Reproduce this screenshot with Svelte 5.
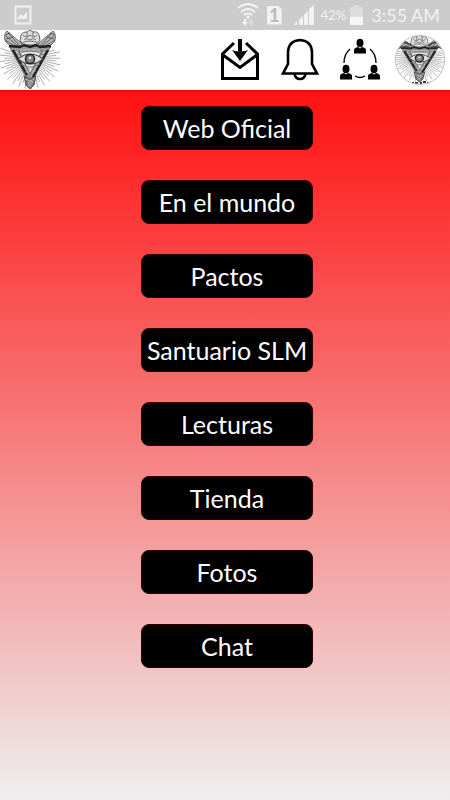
<script>
  const links = ['Web Oficial', 'En el mundo', 'Pactos', 'Santuario SLM', 'Lecturas', 'Tienda', 'Fotos', 'Chat'];

  const rays = Array.from({ length: 36 }, (_, i) => {
    const angle = (-18 + i * (216 / 35)) * Math.PI / 180;
    const end = i % 2 ? 31 : 26;
    return {
      x1: 30 + 13 * Math.cos(angle),
      y1: 28 + 13 * Math.sin(angle),
      x2: 30 + end * Math.cos(angle),
      y2: 28 + end * Math.sin(angle)
    };
  });
</script>

{#snippet emblem()}
  <g fill="none" stroke="#333">
    {#each rays as r}
      <line x1={r.x1} y1={r.y1} x2={r.x2} y2={r.y2} stroke="#777" stroke-width=".6" />
    {/each}
    <path d="M7 1C4 4 4 9 6 12l6 6 12 1-3-6zM53 1c3 3 3 8 1 11l-6 6-12 1 3-6z" fill="#bbb" stroke-width=".7" />
    <path d="M8 3l12 13M6 6l13 11M5 10l13 8M52 3 40 16M54 6 41 17M55 10l-13 8M10 3l-5 2M13 7l-7 2M50 3l5 2M47 7l7 2" stroke="#444" stroke-width=".8" />
    <path d="M21 5q2-4 6-3l3-2 3 2q5-1 6 3l1 5-4 5H24l-4-4z" fill="#ddd" stroke="#555" stroke-width=".9" />
    <path d="M23 5q3 4 7 0 4 4 7 0M24 10q3-3 6 0 3-3 6 0M22 13q8-4 16 0M27 2v5M33 2v5" stroke="#666" stroke-width=".9" />
    <path d="M9 16h42L30 54z" fill="#999" stroke="#555" stroke-width=".8" />
    <path d="M19 21h23L30 44z" fill="#eee" stroke="#555" stroke-width="1" />
    <path d="M9 16l11 1 4-2 6 2 6-2 4 2 11-1M13 20l14 25M48 20 33 47" stroke="#222" stroke-width="2.4" />
    <path d="M16 21l13 23M44 22 32 44M20 20h20" stroke="#ccc" stroke-width="1.1" />
    <path d="M18 29q12-10 25 0-12 10-25 0z" fill="#ddd" stroke="#444" stroke-width="1.1" />
    <path d="M17 25q13-8 27 0M20 34q10 6 20 0" stroke="#777" stroke-width=".9" />
    <circle cx="30" cy="29" r="4.500" fill="#888" stroke="#222" stroke-width="1.500" />
    <circle cx="30" cy="28" r="1.200" fill="#eee" stroke="none" />
    <path d="M26 36v7M29 36v9M32 36v9M35 36v6" stroke="#999" stroke-width=".9" />
    <path d="M24 46l6 3 6-3-2 9-4 4-4-4z" fill="#777" stroke="#444" stroke-width=".9" />
    <path d="M25 49l8 3-5 4M35 48l-7 5 3 4" stroke="#ccc" stroke-width=".8" />
  </g>
{/snippet}

<div class="app">
  <header>
    <div class="status">
      <svg width="18" height="20" viewBox="0 0 18 20"><path d="M1.500 1.500h15v17h-15z" fill="none" stroke="#f0f0f0" stroke-width="2" /><path d="M4 14v-2l3-3 2 2 4-4v7z" fill="#f0f0f0" /></svg>
      <svg class="wifi" width="22" height="24" viewBox="0 0 22 24" fill="none" stroke="#f4f4f4" stroke-width="2"><path d="M1 5q10-8 20 0M4 9q7-6 14 0M7 12q4-3 8 0" /><circle cx="11" cy="14" r="1.500" fill="#f4f4f4" stroke="none" /><path d="M8 16v4" /><path d="M5 19h6l-3 4z" fill="#f4f4f4" stroke="none" /><path d="M14 23v-4" stroke="#ddd" /><path d="M11 20h6l-3-4z" fill="#ddd" stroke="none" /></svg>
      <span class="sim">1</span>
      <svg class="signal" width="22" height="22" viewBox="0 0 22 22" fill="#f2f2f2"><path d="M1 21v-1l3-3v4zM6 21v-5l4-4v9zM11 21V11l4-4v14zM16 21V5l5-4v20z" /></svg>
      <span class="percent">42%</span>
      <svg class="battery" width="13" height="20" viewBox="0 0 13 20"><path d="M4 0h5v2h4v18H0V2h4z" fill="#ddd" /><path d="M0 12h13v8H0z" fill="#f6f6f6" /></svg>
      <time>3:55 AM</time>
    </div>
    <nav class="bar">
      <a href="#inicio" aria-label="Inicio"><svg width="60" height="60" viewBox="0 0 60 60">{@render emblem()}</svg></a>
      <div class="actions">
        <button aria-label="Mensajes"><svg width="40" height="60" viewBox="0 0 40 60" fill="none" stroke="#000" stroke-width="3"><path d="M14 13 2.500 24v24.500h35V24L26 13" /><path d="M3 25l17 12.500L37 25" /><path d="M20 9v12" stroke-width="4" /><path d="M12 20q4 2 8 1 4 1 8-1l-8 11z" fill="#000" stroke="none" /></svg></button>
        <button aria-label="Notificaciones"><svg width="40" height="60" viewBox="0 0 40 60" fill="none" stroke="#000" stroke-width="2.600"><path d="M8 34V23q0-12 12-13 12 1 12 13v11l5 9.500H3z" /><path d="M14.500 44q1 5 5.500 5t5.500-5" /></svg></button>
        <button aria-label="Comunidad"><svg width="42" height="60" viewBox="0 0 42 60"><g id="person"><ellipse cx="20" cy="13" rx="3.500" ry="4.200" /><path d="M14 23.500v-3.500q0-2 4-3l2 1.500 2-1.500q4 1 4 3v3.500z" /></g><use href="#person" x="-14" y="26" /><use href="#person" x="14" y="26" /><path d="M10 19q-6 5-6 14M30 19q6 5 6 14M15 46q5 3 10 0" fill="none" stroke="#000" stroke-width="1.300" /></svg></button>
        <button aria-label="Perfil"><svg width="50" height="60" viewBox="0 0 50 60"><defs><clipPath id="round"><circle cx="25" cy="30" r="24" /></clipPath></defs><circle cx="25" cy="30" r="24.500" fill="#fff" stroke="#aaa" stroke-width=".8" /><g clip-path="url(#round)"><g transform="translate(-2 5) scale(.88 .8)">{@render emblem()}</g><path d="M1 15q8-6 16 1M49 15q-8-6-16 1M2 19q7-4 13-1M48 19q-7-4-13-1" fill="none" stroke="#444" stroke-width="1.500" /><path d="M17 53h2m1 0h3m2 0h2m1-1h3m1 1h2" stroke="#333" stroke-width="2" /></g></svg></button>
      </div>
    </nav>
  </header>
  <main>
    {#each links as label}
      <button class="link">{label}</button>
    {/each}
  </main>
</div>

<style>
  .app {
    min-height: 100vh;
    display: flex;
    flex-direction: column;
    font-family: Lato, "Noto Sans", sans-serif;
  }
  .status {
    height: 30px;
    box-sizing: border-box;
    display: flex;
    align-items: center;
    padding: 0 10px 0 14px;
    background: #ccc;
    color: #f2f2f2;
  }
  .wifi {
    margin-left: auto;
  }
  .sim {
    width: 15px;
    height: 19px;
    margin-left: 8px;
    background: #f2f2f2;
    color: #bbb;
    font-size: 18px;
    font-weight: 900;
    line-height: 19px;
    text-align: center;
    clip-path: polygon(0 0, 75% 0, 100% 20%, 100% 100%, 0 100%);
  }
  .signal {
    margin-left: 11px;
  }
  .percent {
    margin-left: 6px;
    font-size: 13px;
  }
  .battery {
    margin-left: 4px;
  }
  time {
    margin-left: 8px;
    font-size: 18px;
  }
  .bar {
    height: 60px;
    display: flex;
    justify-content: space-between;
    padding-right: 5px;
    background: #fff;
  }
  .actions {
    display: flex;
    gap: 20px;
  }
  .actions button {
    padding: 0;
    border: 0;
    background: none;
  }
  .actions button:last-child {
    margin-left: -7px;
  }
  svg {
    display: block;
    flex: none;
  }
  main {
    flex: 1;
    display: flex;
    flex-direction: column;
    align-items: center;
    gap: 30px;
    padding: 14px 0 30px 4px;
    background: linear-gradient(#ff1111, #eee);
    border-top: 2px solid #f00;
  }
  .link {
    min-width: 172px;
    height: 44px;
    padding: 0 4px;
    border: 1px solid #300;
    border-radius: 8px;
    background: #000;
    color: #fff;
    font-family: inherit;
    font-size: 25px;
    line-height: 30px;
  }
</style>
